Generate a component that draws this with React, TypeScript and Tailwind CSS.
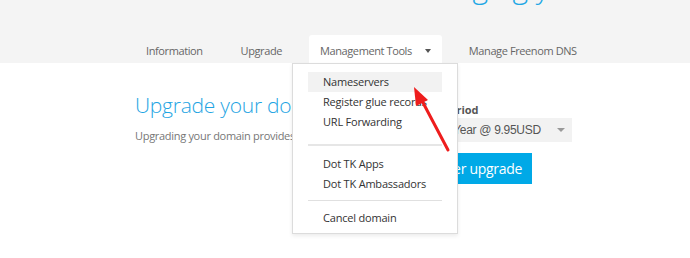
import React from "react";

export default function App() {
  return (
    <div className="relative w-[690px] h-[258px] overflow-hidden bg-white font-['Open_Sans',sans-serif]">
      <header className="h-[63px] bg-[#f4f4f4] flex flex-col">
        <div className="h-[35px] overflow-hidden">
          <div className="-mt-[33px] pl-[397px] text-[30px] leading-[40px] font-light text-[#1ea7e4] whitespace-nowrap">
            Managing your domain
          </div>
        </div>
        <nav className="flex h-[28px] pl-[135px] gap-[16px] text-[11px] tracking-[-0.4px] text-[#666]">
          <div className="px-[11px] pt-[4px] flex items-center">Information</div>
          <div className="px-[11px] pt-[4px] flex items-center">Upgrade</div>
          <div className="px-[11px] pt-[4px] flex items-center bg-white rounded-t-[3px]">
            <span>Management Tools</span>
            <span className="ml-[13px] w-0 h-0 border-l-[3px] border-r-[3px] border-t-[4px] border-l-transparent border-r-transparent border-t-[#555]" />
          </div>
          <div className="px-[11px] pt-[4px] flex items-center">Manage Freenom DNS</div>
        </nav>
      </header>

      <main className="flex pt-[27px] pl-[135px]">
        <div className="w-[297px]">
          <h1 className="text-[21px] leading-[30px] font-light tracking-[-0.25px] text-[#1fa5e3] whitespace-nowrap">
            Upgrade your domain
          </h1>
          <p className="mt-[7px] text-[11px] leading-[18px] tracking-[-0.3px] text-[#777] whitespace-nowrap">
            Upgrading your domain provides
          </p>
        </div>
        <div className="w-[140px] pt-[13px]">
          <div className="text-[11px] leading-[14px] font-bold text-[#555] pl-[11px]">Period</div>
          <div className="mt-[1px] h-[24px] bg-[#f2f2f2] flex items-center justify-between pl-[12px] pr-[7px] font-['Liberation_Sans',sans-serif] text-[12px] tracking-[-0.3px] text-[#555]">
            <span>1 Year @ 9.95USD</span>
            <span className="w-0 h-0 border-l-[4px] border-r-[4px] border-t-[4px] border-l-transparent border-r-transparent border-t-[#999]" />
          </div>
          <button className="mt-[11px] h-[31px] w-[100px] flex items-center justify-end pr-[10px] bg-[#00a9e7] text-white text-[14px] tracking-[-0.3px] whitespace-nowrap">
            Order upgrade
          </button>
        </div>
      </main>

      <div className="absolute left-[292px] top-[63px] w-[166px] h-[171px] bg-white border border-[#dcdcdc] shadow-[0_2px_4px_rgba(0,0,0,0.08)] pt-[8px] px-[15px] text-[11px] tracking-[-0.2px] text-[#333]">
        <div className="h-[20px] leading-[20px] pl-[15px] bg-[#f2f2f2]">Nameservers</div>
        <div className="h-[20px] leading-[20px] pl-[15px]">Register glue records</div>
        <div className="h-[20px] leading-[20px] pl-[15px]">URL Forwarding</div>
        <div className="mt-[12px] mb-[8px] h-[2px] bg-[#e6e6e6]" />
        <div className="h-[20px] leading-[20px] pl-[15px]">Dot TK Apps</div>
        <div className="h-[20px] leading-[20px] pl-[15px]">Dot TK Ambassadors</div>
        <div className="mt-[6px] mb-[7px] h-[1px] bg-[#e0e0e0]" />
        <div className="h-[20px] leading-[20px] pl-[15px]">Cancel domain</div>
      </div>

      <svg className="absolute left-0 top-0" width="690" height="258" viewBox="0 0 690 258">
        <line x1="448" y1="150" x2="420" y2="97" stroke="#ee1d1d" strokeWidth="3" strokeLinecap="round" />
        <polygon points="414,87 428,100 416,106" fill="#ee1d1d" />
      </svg>
    </div>
  );
}
